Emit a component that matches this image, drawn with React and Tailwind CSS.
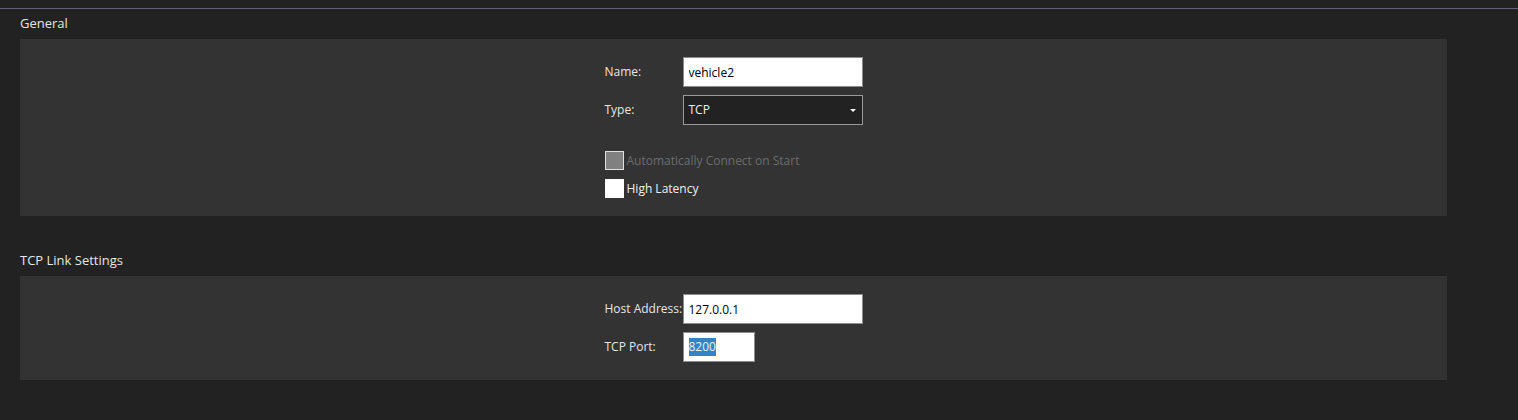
import { useState } from 'react'

const FONT = { fontFamily: '"Open Sans", "Noto Sans", sans-serif' }

function SectionTitle({ children }) {
  return (
    <div className="flex h-[30px] items-start pt-[5px] text-[13px] leading-[18px] text-[#e6e6e6]">
      {children}
    </div>
  )
}

function Panel({ children }) {
  return (
    <div className="flex w-[1427px] justify-center bg-[#333333] pt-[18px] pb-[18px]">
      <div className="flex w-[258px] flex-col">{children}</div>
    </div>
  )
}

function FieldRow({ label, children }) {
  return (
    <div className="flex h-[30px] items-center">
      <span className="w-[78px] shrink-0 whitespace-nowrap text-[12px] text-[#e6e6e6]">{label}</span>
      {children}
    </div>
  )
}

function TextBox({ value }) {
  return (
    <input
      readOnly
      value={value}
      className="h-[30px] w-[180px] border border-[#8c8c8c] bg-white px-[5px] text-[12px] text-black outline-none"
    />
  )
}

function Check({ label, checked, disabled, onToggle }) {
  return (
    <button
      type="button"
      onClick={onToggle}
      disabled={disabled}
      className="flex h-[19px] items-center gap-[3px] text-left"
    >
      <span
        className={`h-[19px] w-[19px] shrink-0 border ${
          disabled ? 'border-[#e0e0e0] bg-[#808080]' : 'border-white bg-white'
        }`}
      >
        {checked ? <span className="block h-full w-full bg-[#3383c8]" /> : null}
      </span>
      <span className={`whitespace-nowrap text-[12px] ${disabled ? 'text-[#6c6c6c]' : 'text-[#f0f0f0]'}`}>
        {label}
      </span>
    </button>
  )
}

export default function App() {
  const [highLatency, setHighLatency] = useState(false)

  return (
    <div className="h-[420px] w-[1518px] overflow-hidden bg-[#222222]" style={FONT}>
      <div className="mt-[8px] h-px w-full bg-[#63617a]" />

      <div className="pl-[20px]">
        <SectionTitle>General</SectionTitle>
        <Panel>
          <div className="flex flex-col gap-[8px]">
            <FieldRow label="Name:">
              <TextBox value="vehicle2" />
            </FieldRow>
            <FieldRow label="Type:">
              <div className="relative flex h-[30px] w-[180px] items-center border border-[#9a9a9a] bg-[#222222] px-[5px] text-[12px] text-[#f0f0f0]">
                TCP
                <span className="absolute right-[6px] top-[13px] h-0 w-0 border-x-[3px] border-t-[3px] border-x-transparent border-t-white" />
              </div>
            </FieldRow>
          </div>
          <div className="mt-[26px] flex flex-col gap-[9px]">
            <Check label="Automatically Connect on Start" disabled />
            <Check
              label="High Latency"
              checked={highLatency}
              onToggle={() => setHighLatency((v) => !v)}
            />
          </div>
        </Panel>

        <div className="h-[30px]" />

        <SectionTitle>TCP Link Settings</SectionTitle>
        <Panel>
          <div className="flex flex-col gap-[8px]">
            <FieldRow label="Host Address:">
              <TextBox value="127.0.0.1" />
            </FieldRow>
            <FieldRow label="TCP Port:">
              <div className="flex h-[30px] w-[72px] items-center border border-[#8c8c8c] bg-white px-[5px] text-[12px]">
                <span className="bg-[#3383c8] text-[#e8f2ff]">8200</span>
              </div>
            </FieldRow>
          </div>
        </Panel>
      </div>
    </div>
  )
}
